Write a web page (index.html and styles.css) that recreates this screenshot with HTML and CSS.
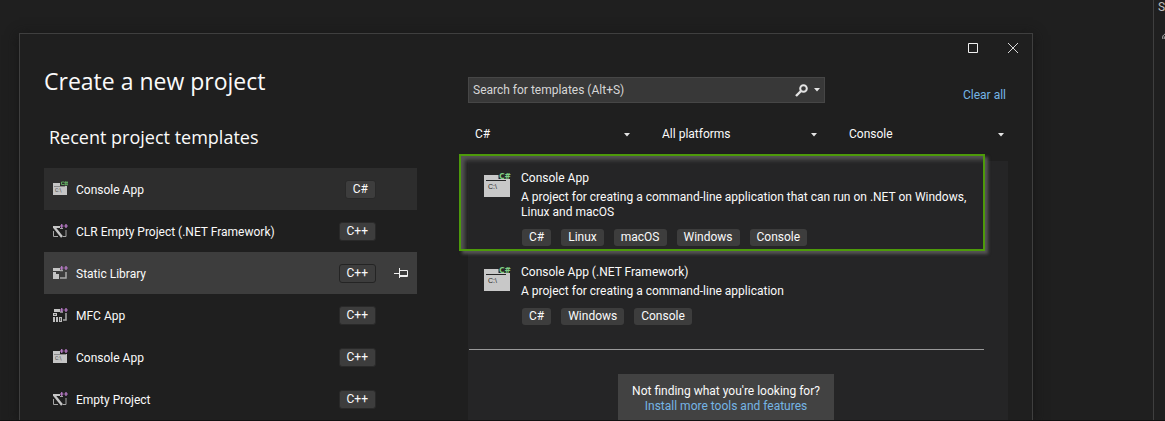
FILE: index.html
```html
<!DOCTYPE html>
<html lang="en">
<head>
<meta charset="utf-8">
<title>Create a new project</title>
<link rel="stylesheet" href="styles.css">
</head>
<body>
<svg class="defs" aria-hidden="true">
  <symbol id="plus" viewBox="0 0 8 4"><path d="M0 2h3.500M1.750 0v4M4.300 2h3.500M6 0v4" stroke="#c07fd0" stroke-width="1.200"/></symbol>
  <symbol id="empty" viewBox="0 0 16 16">
    <path d="M1 3h7v2H1z" fill="#c5c5c5"/>
    <path d="M2 4L10 14" stroke="#c5c5c5" stroke-width="2.400"/>
    <path d="M1.500 8v5.500H6M8 5.500h3M14 7v6.500H11" fill="none" stroke="#a5a5a5"/>
    <use href="#plus" x="8" y="1" width="8" height="4"/>
  </symbol>
  <symbol id="library" viewBox="0 0 16 16">
    <path d="M1 3h7v3H1zM1 7h3v7H1zM4 9h3v5H4z" fill="#c5c5c5"/>
    <path d="M8 5.500h3M14 7v6H8" fill="none" stroke="#a9a9a9" stroke-width="1.500"/>
    <use href="#plus" x="8" y="1" width="8" height="4"/>
  </symbol>
  <symbol id="mfc" viewBox="0 0 16 16">
    <path d="M2 2h6v3H2zM1 6h4v3H1z" fill="#c5c5c5"/><path d="M2 7.500h2" stroke="#555"/>
    <path d="M8 5h3M14 6v7H11" fill="none" stroke="#a9a9a9" stroke-width="1.500"/>
    <path d="M1 10h2v5H1zM4 10h2v5H4zM7 10h3v5H7z" fill="#bdbdbd"/><path d="M8.500 11v3" stroke="#555"/>
    <use href="#plus" x="8" y="1" width="8" height="4"/>
  </symbol>
  <symbol id="arrow" viewBox="0 0 6 4"><path d="M0 0h6L3 3.500z" fill="#e4e4e4"/></symbol>
</svg>

<div class="workspace">
  <main class="dialog">
    <section class="recent">
      <h1>Create a new project</h1>
      <h2>Recent project templates</h2>
      <ul class="recent-list">
        <li class="row selected"><button class="template" type="button"><svg class="icon" viewBox="0 0 16 16"><path d="M1 2h7v3h7v9H1z" fill="#c5c5c5"/><path d="M2 5.500h11" stroke="#8a8a8a"/><text class="mini" x="3" y="11">C:\</text><path d="M12 1H9.500v2.500H12M12.300 1.500h3.700M12.300 3.300h3.700M13.300 .2v4.300M15 .2v4.300" fill="none" stroke="#5fa55f"/></svg><span class="label">Console App</span><span class="tag">C#</span></button></li>
        <li class="row"><button class="template" type="button"><svg class="icon"><use href="#empty"/></svg><span class="label">CLR Empty Project (.NET Framework)</span><span class="tag">C++</span></button></li>
        <li class="row hovered"><button class="template" type="button"><svg class="icon"><use href="#library"/></svg><span class="label">Static Library</span><span class="tag">C++</span></button><button class="pin" type="button" aria-label="Pin Static Library"><svg width="14" height="10" viewBox="0 0 14 10"><path d="M0 5.500h5M5.500 0v10M5.500 2.500h8v6h-8M6 7.500h7" fill="none" stroke="#f0f0f0"/></svg></button></li>
        <li class="row"><button class="template" type="button"><svg class="icon"><use href="#mfc"/></svg><span class="label">MFC App</span><span class="tag">C++</span></button></li>
        <li class="row"><button class="template" type="button"><svg class="icon" viewBox="0 0 16 16"><path d="M1 2h7v3h7v9H1z" fill="#c5c5c5"/><path d="M2 5.500h12" stroke="#8a8a8a"/><text class="mini" x="3" y="11">C:\</text><use href="#plus" x="8" y="0" width="8" height="4"/></svg><span class="label">Console App</span><span class="tag">C++</span></button></li>
        <li class="row"><button class="template" type="button"><svg class="icon"><use href="#empty"/></svg><span class="label">Empty Project</span><span class="tag">C++</span></button></li>
      </ul>
    </section>

    <section class="browse">
      <div class="window-buttons">
        <button type="button" aria-label="Maximize"><svg width="10" height="10" viewBox="0 0 10 10"><path d="M.5 .5h9v9h-9z" fill="none" stroke="#f0f0f0"/></svg></button>
        <button type="button" aria-label="Close"><svg width="10" height="10" viewBox="0 0 10 10"><path d="M0 0l10 10M10 0L0 10" stroke="#d8d8d8"/></svg></button>
      </div>
      <div class="search-row">
        <div class="search">
          <input type="text" aria-label="Search for templates" placeholder="Search for templates (Alt+S)">
          <button type="button" aria-label="Search"><svg width="13" height="13" viewBox="0 0 13 13"><circle cx="8.500" cy="4.500" r="3.300" fill="none" stroke="#e4e4e4" stroke-width="2"/><path d="M6 7L1 12" stroke="#e4e4e4" stroke-width="2.400"/></svg></button>
          <button type="button" aria-label="Search options"><svg class="arrow"><use href="#arrow"/></svg></button>
        </div>
        <a class="clear" href="#">Clear all</a>
      </div>
      <div class="filters">
        <label class="filter"><select aria-label="Language"><option>C#</option></select><svg class="arrow"><use href="#arrow"/></svg></label>
        <label class="filter"><select aria-label="Platform"><option>All platforms</option></select><svg class="arrow"><use href="#arrow"/></svg></label>
        <label class="filter"><select aria-label="Project type"><option>Console</option></select><svg class="arrow"><use href="#arrow"/></svg></label>
      </div>
      <div class="results">
        <article class="result highlighted">
          <svg class="icon-large" viewBox="0 0 28 26"><path d="M0 4h14.500v4H26v18H0z" fill="#c8c8c8"/><path d="M2 9.500h20" stroke="#252526"/><text x="4" y="18" class="prompt">C:\</text><text x="15" y="8" class="lang">C#</text></svg>
          <div class="details">
            <h3>Console App</h3>
            <p>A project for creating a command-line application that can run on .NET on Windows, Linux and macOS</p>
            <div class="tags"><span class="tag">C#</span><span class="tag">Linux</span><span class="tag">macOS</span><span class="tag">Windows</span><span class="tag">Console</span></div>
          </div>
        </article>
        <article class="result">
          <svg class="icon-large" viewBox="0 0 28 26"><path d="M0 4h14.500v4H26v18H0z" fill="#c8c8c8"/><path d="M2 9.500h20" stroke="#252526"/><text x="4" y="18" class="prompt">C:\</text><text x="15" y="8" class="lang">C#</text></svg>
          <div class="details">
            <h3>Console App (.NET Framework)</h3>
            <p>A project for creating a command-line application</p>
            <div class="tags"><span class="tag">C#</span><span class="tag">Windows</span><span class="tag">Console</span></div>
          </div>
        </article>
        <hr>
        <div class="help"><p>Not finding what you're looking for?</p><a href="#">Install more tools and features</a></div>
      </div>
    </section>
  </main>
  <aside class="side"><span>S</span><svg width="10" height="10" viewBox="0 0 10 10"><path d="M1 8c-1-3 1-5 3-5v2c-1 0-2 1-1 3M3 2l2-2" fill="none" stroke="#c0c0c0"/></svg></aside>
</div>
</body>
</html>
```
FILE: styles.css
```css
* { box-sizing: border-box; }
body {
  margin: 0;
  background: #1f1f1f;
  color: #fafafa;
  font: 12px/15px Roboto, "Open Sans", sans-serif;
  overflow: hidden;
}
h1, h2, h3, p, ul { margin: 0; padding: 0; font-weight: 400; }
button, input, select { font: inherit; color: inherit; background: none; border: 0; padding: 0; margin: 0; }
a { color: #75b5e5; text-decoration: none; }
svg { display: block; flex: none; }
.defs { position: absolute; width: 0; height: 0; }

.workspace { display: flex; min-height: 100vh; gap: 120px; border-bottom: 1px solid #111; }
.dialog {
  flex: 1;
  display: flex;
  gap: 51px;
  margin: 33px 0 0 19px;
  padding-left: 24px;
  border: 1px solid #3f3f3f;
  border-bottom: 0;
  box-shadow: 0 2px 12px #151515;
}
.side {
  display: flex;
  flex-direction: column;
  gap: 16px;
  width: 12px;
  padding: 0 4px;
  overflow: hidden;
  border-left: 1px solid #3f3f3f;
  color: #c0c0c0;
}
.side svg { margin-left: 4px; }

.recent { flex: 373 1 0; }
h1, h2 { font-family: "Open Sans", "Noto Sans", sans-serif; }
h1 { padding-top: 31px; font-size: 23px; line-height: 32px; }
h2 { padding: 28px 5px 18px; font-size: 18px; line-height: 25px; }
.recent-list { list-style: none; }
.row { display: flex; height: 42px; }
.selected { background: #2d2d2d; }
.hovered { background: #3d3d3d; }
.template { display: flex; flex: 1; align-items: center; padding-left: 8px; text-align: left; }
.row .template { margin-right: 41px; }
.row.hovered .template { margin-right: 0; }
.icon { width: 16px; height: 16px; margin-right: 8px; }
.mini { font-size: 5px; fill: #444; }
.label { flex: 1; padding-top: 2px; }
.pin { display: flex; align-items: center; justify-content: center; width: 41px; padding-left: 9px; }
.tag { padding: 0 7px; border-radius: 3px; background: #3d3d3d; line-height: 17px; }
.template .tag { border: 1px solid #292929; }
.hovered .tag { border-color: #242424; }

.browse { flex: 564 1 0; }
.window-buttons { display: flex; justify-content: flex-end; gap: 2px; }
.window-buttons button { display: grid; place-items: center; width: 38px; height: 28px; }
.search-row { display: flex; align-items: center; justify-content: space-between; padding: 15px 26px 0 0; }
.search {
  display: flex;
  align-items: center;
  gap: 6px;
  width: 357px;
  height: 26px;
  padding: 0 4px;
  border: 1px solid #464646;
  background: #383838;
}
.search input { flex: 1; outline: 0; }
.search input::placeholder { color: #d6d6d6; opacity: 1; }
.arrow { width: 6px; height: 4px; }
.clear { padding-top: 11px; }
.filters { display: grid; grid-template-columns: repeat(3, 1fr); gap: 19px; padding: 22px 22px 17px 0; }
.filter { display: flex; align-items: center; padding: 0 6px 0 7px; }
.filter select { flex: 1; appearance: none; outline: 0; height: 19px; }

.results { margin-right: 24px; padding: 9px 24px 0 0; background: #252526; }
.result { position: relative; display: flex; gap: 9px; padding: 0 0 18px 16px; }
.highlighted::after {
  content: "";
  position: absolute;
  inset: -16px -1px 13px -9px;
  border: 2px solid #4d9a0a;
  box-shadow: 3px 3px 3px #555, inset 4px 4px 4px #555;
  pointer-events: none;
}
.icon-large { width: 28px; height: 26px; margin-top: 1px; overflow: visible; }
.prompt { font: 7px "Liberation Sans", sans-serif; fill: #252526; }
.lang { font: bold 9px "Open Sans", sans-serif; fill: #80cf85; }
.details { flex: 1; }
h3 { font-size: 12px; line-height: 16px; }
.details p { margin-top: 4px; }
.tags { display: flex; gap: 10px; margin: 9px 1px 0; }
hr { height: 1px; margin: 6px 0 24px 1px; border: 0; background: #999; }
.help { width: fit-content; margin: 0 auto; padding: 10px 14px 6px; background: #424242; text-align: center; }
```
